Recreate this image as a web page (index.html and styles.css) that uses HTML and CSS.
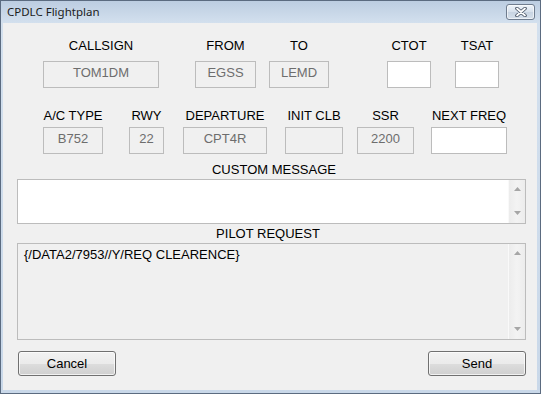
FILE: index.html
```html
<!DOCTYPE html>
<html lang="en">
<head>
    <meta charset="UTF-8">
    <title>CPDLC Flightplan</title>
    <link rel="stylesheet" href="styles.css">
</head>
<body>
    <div class="window">
        <!-- Title bar -->
        <div class="titlebar">
            <span class="title">CPDLC Flightplan</span>
            <div class="close-btn">
                <svg width="14" height="10" viewBox="0 0 14 10">
                    <path d="M3 1.5 L11 8.5 M11 1.5 L3 8.5" stroke="#4a5566" stroke-width="3.6" stroke-linecap="round"/>
                    <path d="M3 1.5 L11 8.5 M11 1.5 L3 8.5" stroke="#ffffff" stroke-width="1.8" stroke-linecap="round"/>
                </svg>
            </div>
        </div>

        <div class="client">
            <!-- Row 1: callsign, airports, times -->
            <div class="field-row row-top">
                <div class="field callsign"><span class="label">CALLSIGN</span><div class="box">TOM1DM</div></div>
                <div class="field from"><span class="label">FROM</span><div class="box">EGSS</div></div>
                <div class="field to"><span class="label">TO</span><div class="box">LEMD</div></div>
                <div class="field ctot"><span class="label">CTOT</span><div class="box editable"></div></div>
                <div class="field tsat"><span class="label">TSAT</span><div class="box editable"></div></div>
            </div>

            <!-- Row 2: aircraft and departure data -->
            <div class="field-row row-bottom">
                <div class="field actype"><span class="label">A/C TYPE</span><div class="box">B752</div></div>
                <div class="field rwy"><span class="label">RWY</span><div class="box">22</div></div>
                <div class="field departure"><span class="label">DEPARTURE</span><div class="box">CPT4R</div></div>
                <div class="field initclb"><span class="label">INIT CLB</span><div class="box"></div></div>
                <div class="field ssr"><span class="label">SSR</span><div class="box">2200</div></div>
                <div class="field nextfreq"><span class="label">NEXT FREQ</span><div class="box editable"></div></div>
            </div>

            <!-- Custom message -->
            <div class="section-label custom-label">CUSTOM MESSAGE</div>
            <div class="memo memo-custom">
                <div class="memo-text"></div>
                <div class="scrollbar">
                    <svg width="7" height="4" viewBox="0 0 7 4"><path d="M0 4 L3.5 0 L7 4 Z" fill="#a6a6a6"/></svg>
                    <svg width="7" height="4" viewBox="0 0 7 4"><path d="M0 0 L3.5 4 L7 0 Z" fill="#a6a6a6"/></svg>
                </div>
            </div>

            <!-- Pilot request -->
            <div class="section-label pilot-label">PILOT REQUEST</div>
            <div class="memo memo-pilot">
                <div class="memo-text">{/DATA2/7953//Y/REQ CLEARENCE}</div>
                <div class="scrollbar">
                    <svg width="7" height="4" viewBox="0 0 7 4"><path d="M0 4 L3.5 0 L7 4 Z" fill="#a6a6a6"/></svg>
                    <svg width="7" height="4" viewBox="0 0 7 4"><path d="M0 0 L3.5 4 L7 0 Z" fill="#a6a6a6"/></svg>
                </div>
            </div>

            <!-- Buttons -->
            <div class="button-row">
                <button class="btn">Cancel</button>
                <button class="btn">Send</button>
            </div>
        </div>
    </div>
</body>
</html>
```

FILE: styles.css
```css
/* Reset default margin and padding for body */
body {
    margin: 0;
    padding: 0;
    font-family: "Liberation Sans", Arial, sans-serif;
    font-size: 13px;
    color: #000;
}

/* Window frame (Windows 7 basic look) */
.window {
    width: 541px;
    height: 394px;
    box-sizing: border-box;
    border: 1px solid #5b6b80;
    background: linear-gradient(to bottom, #bccde1 0px, #d3e0ee 22px, #c9d8e9 100%);
    display: flex;
    flex-direction: column;
}

.titlebar {
    height: 22px;
    display: flex;
    justify-content: space-between;
    align-items: flex-start;
    flex-shrink: 0;
}

.title {
    font-family: "Noto Sans", "Open Sans", sans-serif;
    font-size: 11.5px;
    line-height: 16px;
    margin: 3px 0 0 6px;
    color: #1b1b1b;
}

.close-btn {
    width: 27px;
    height: 14px;
    margin: 3px 5px 0 0;
    border: 1px solid #6f7c8e;
    border-radius: 3px;
    background: linear-gradient(to bottom, #eef3f9, #d7e1ec 50%, #c8d4e2 51%, #d6e0eb);
    box-shadow: inset 0 0 0 1px rgba(255, 255, 255, 0.6);
    display: flex;
    align-items: center;
    justify-content: center;
}

/* Client area */
.client {
    flex: 1;
    margin: 0 3px 3px 2px;
    background: #f0f0f0;
    display: flex;
    flex-direction: column;
}

.field-row {
    display: flex;
}

.row-top {
    margin-top: 15px;
}

.row-bottom {
    margin-top: 20px;
}

.field {
    display: flex;
    flex-direction: column;
    align-items: center;
}

.label {
    line-height: 15px;
    white-space: nowrap;
}

.row-top .label {
    margin-bottom: 8px;
}

.row-bottom .label {
    margin-bottom: 4px;
}

/* Text boxes */
.box {
    width: 100%;
    height: 27px;
    box-sizing: border-box;
    border: 1px solid #bcbcbc;
    background: #f0f0f0;
    color: #6d6d6d;
    text-align: center;
    line-height: 15px;
    padding-top: 3px;
}

.box.editable {
    background: #fff;
}

/* Field widths and spacing, row 1 */
.callsign { width: 116px; margin-left: 40px; }
.from     { width: 61px;  margin-left: 36px; }
.to       { width: 60px;  margin-left: 13px; }
.ctot     { width: 44px;  margin-left: 58px; }
.tsat     { width: 44px;  margin-left: 24px; }

/* Field widths and spacing, row 2 */
.actype    { width: 60px; margin-left: 40px; }
.rwy       { width: 35px; margin-left: 26px; }
.departure { width: 84px; margin-left: 19px; }
.initclb   { width: 58px; margin-left: 18px; }
.ssr       { width: 57px; margin-left: 14px; }
.nextfreq  { width: 76px; margin-left: 17px; }

/* Section labels above memos */
.section-label {
    margin: 0 11px 0 14px;
    text-align: center;
    line-height: 15px;
}

.custom-label {
    margin-top: 8px;
    padding-left: 5px;
}

.pilot-label {
    margin-top: 2px;
    padding-right: 7px;
}

/* Multiline boxes */
.memo {
    margin: 2px 11px 0 14px;
    box-sizing: border-box;
    border: 1px solid #bcbcbc;
    display: flex;
}

.memo-custom {
    height: 45px;
    background: #fff;
}

.memo-pilot {
    height: 97px;
    background: #f0f0f0;
}

.memo-text {
    flex: 1;
    padding: 3px 0 0 6px;
    line-height: 15px;
}

.scrollbar {
    width: 17px;
    box-sizing: border-box;
    background: linear-gradient(to right, #ececec, #f3f3f3 50%, #ececec);
    border-left: 1px solid #f9f9f9;
    display: flex;
    flex-direction: column;
    justify-content: space-between;
    align-items: center;
    padding: 7px 0 8px 0;
}

/* Buttons */
.button-row {
    display: flex;
    justify-content: space-between;
    margin: 11px 11px 0 15px;
}

.btn {
    width: 98px;
    height: 25px;
    box-sizing: border-box;
    border: 1px solid #707070;
    border-radius: 3px;
    background: linear-gradient(to bottom, #f2f2f2, #ebebeb 50%, #dddddd 51%, #cfcfcf);
    box-shadow: inset 0 0 0 1px rgba(255, 255, 255, 0.7);
    font-family: inherit;
    font-size: 13px;
    color: #000;
    padding: 0;
}
```
